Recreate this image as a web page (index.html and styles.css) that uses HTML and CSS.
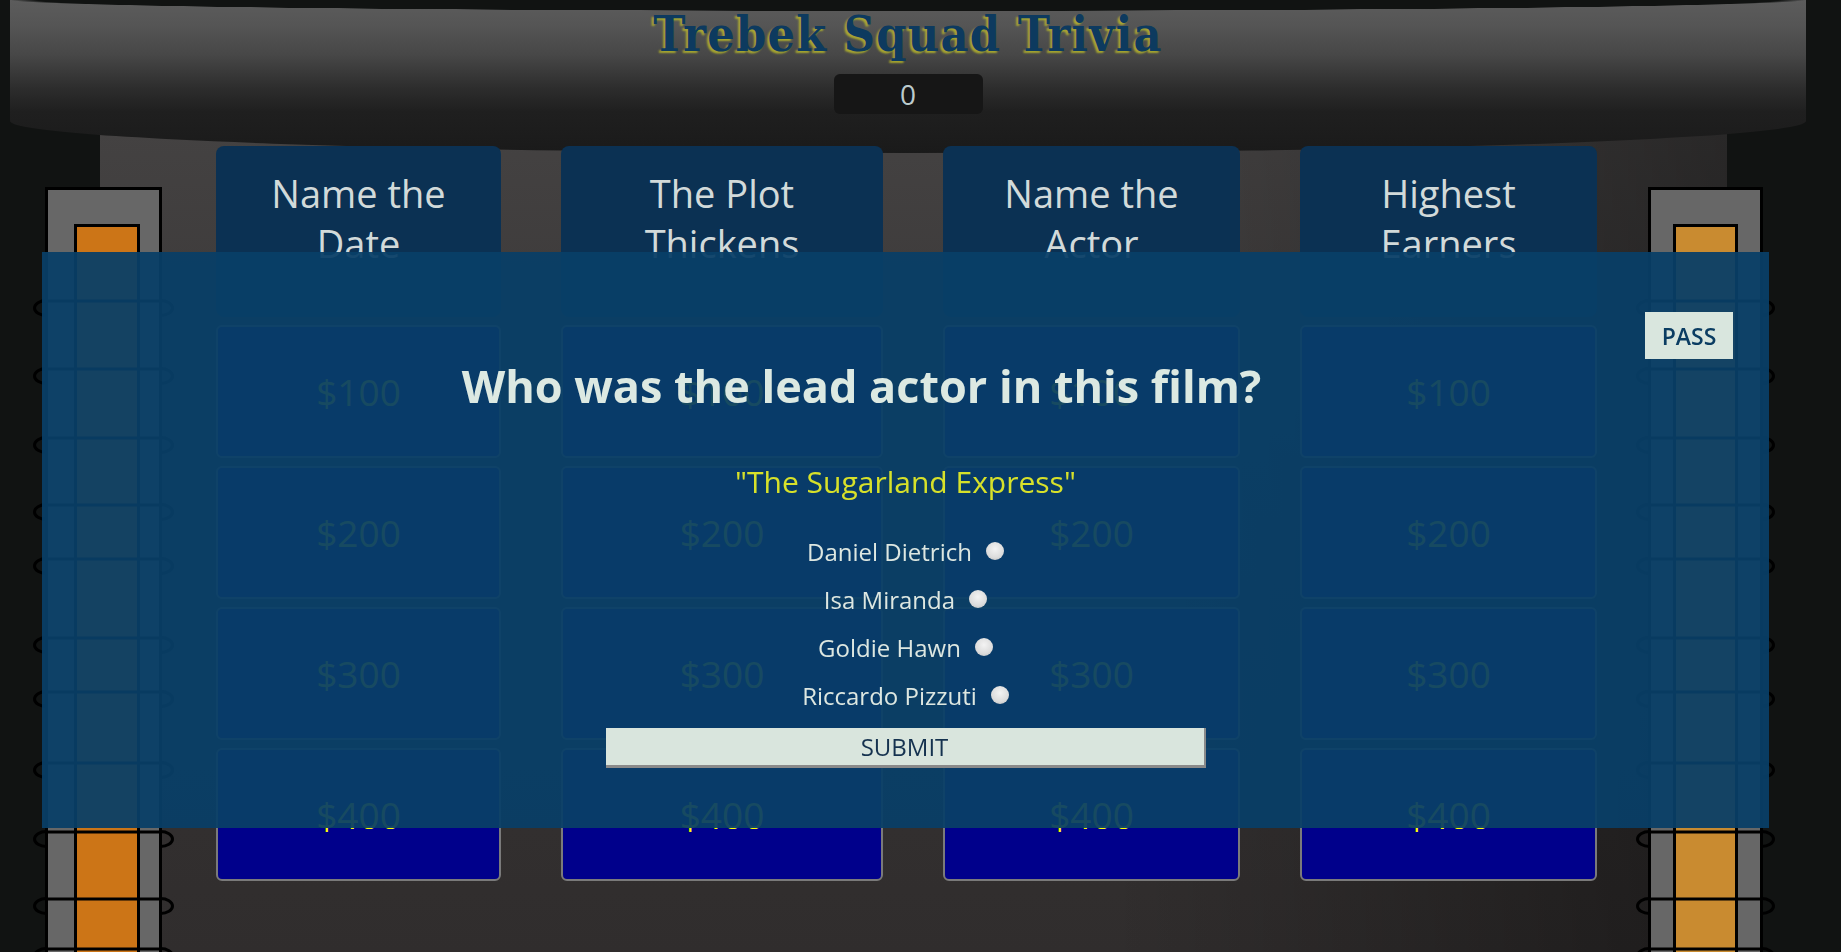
FILE: index.html
```html
<!DOCTYPE html>
<html lang="en">
<head>
<meta charset="utf-8">
<title>Trebek Squad Trivia</title>
<link rel="stylesheet" href="styles.css">
</head>
<body>
<header class="marquee">
  <h1 class="title">Trebek Squad Trivia</h1>
  <div class="score">0</div>
</header>

<main class="floor">
  <svg class="lights" viewBox="0 0 147 800" aria-hidden="true">
    <g fill="none" stroke="#000" stroke-width="3">
      <ellipse cx="15.5" cy="123" rx="12" ry="7.5"/><ellipse cx="129.5" cy="123" rx="12" ry="7.5"/>
      <ellipse cx="15.5" cy="191" rx="12" ry="7.5"/><ellipse cx="129.5" cy="191" rx="12" ry="7.5"/>
      <ellipse cx="15.5" cy="260" rx="12" ry="7.5"/><ellipse cx="129.5" cy="260" rx="12" ry="7.5"/>
      <ellipse cx="15.5" cy="327" rx="12" ry="7.5"/><ellipse cx="129.5" cy="327" rx="12" ry="7.5"/>
      <ellipse cx="15.5" cy="381" rx="12" ry="7.5"/><ellipse cx="129.5" cy="381" rx="12" ry="7.5"/>
      <ellipse cx="15.5" cy="460" rx="12" ry="7.5"/><ellipse cx="129.5" cy="460" rx="12" ry="7.5"/>
      <ellipse cx="15.5" cy="514" rx="12" ry="7.5"/><ellipse cx="129.5" cy="514" rx="12" ry="7.5"/>
      <ellipse cx="15.5" cy="585" rx="12" ry="7.5"/><ellipse cx="129.5" cy="585" rx="12" ry="7.5"/>
      <ellipse cx="15.5" cy="654" rx="12" ry="7.5"/><ellipse cx="129.5" cy="654" rx="12" ry="7.5"/>
      <ellipse cx="15.5" cy="721" rx="12" ry="7.5"/><ellipse cx="129.5" cy="721" rx="12" ry="7.5"/>
      <ellipse cx="15.5" cy="771" rx="12" ry="7.5"/><ellipse cx="129.5" cy="771" rx="12" ry="7.5"/>
    </g>
    <rect x="15.5" y="3.5" width="114" height="900" fill="#676767" stroke="#000" stroke-width="3"/>
    <rect x="44.5" y="40.5" width="63" height="900" fill="#cc7517" stroke="#000" stroke-width="3"/>
    <g stroke="#000" stroke-width="3">
      <line x1="15.5" y1="116" x2="129.5" y2="116"/>
      <line x1="15.5" y1="184" x2="129.5" y2="184"/>
      <line x1="15.5" y1="253" x2="129.5" y2="253"/>
      <line x1="15.5" y1="320" x2="129.5" y2="320"/>
      <line x1="15.5" y1="374" x2="129.5" y2="374"/>
      <line x1="15.5" y1="453" x2="129.5" y2="453"/>
      <line x1="15.5" y1="507" x2="129.5" y2="507"/>
      <line x1="15.5" y1="578" x2="129.5" y2="578"/>
      <line x1="15.5" y1="647" x2="129.5" y2="647"/>
      <line x1="15.5" y1="714" x2="129.5" y2="714"/>
      <line x1="15.5" y1="764" x2="129.5" y2="764"/>
    </g>
  </svg>

  <section class="board">
    <div class="cat">Name the Date</div>
    <div class="cat">The Plot Thickens</div>
    <div class="cat">Name the Actor</div>
    <div class="cat">Highest Earners</div>

    <div class="val">$100</div>
    <div class="val">$100</div>
    <div class="val">$100</div>
    <div class="val">$100</div>

    <div class="val">$200</div>
    <div class="val">$200</div>
    <div class="val">$200</div>
    <div class="val">$200</div>

    <div class="val">$300</div>
    <div class="val">$300</div>
    <div class="val">$300</div>
    <div class="val">$300</div>

    <div class="val">$400</div>
    <div class="val">$400</div>
    <div class="val">$400</div>
    <div class="val">$400</div>
  </section>

  <svg class="lights lights-right" viewBox="0 0 147 800" aria-hidden="true">
    <g fill="none" stroke="#000" stroke-width="3">
      <ellipse cx="15.5" cy="123" rx="12" ry="7.5"/><ellipse cx="127.5" cy="123" rx="12" ry="7.5"/>
      <ellipse cx="15.5" cy="191" rx="12" ry="7.5"/><ellipse cx="127.5" cy="191" rx="12" ry="7.5"/>
      <ellipse cx="15.5" cy="260" rx="12" ry="7.5"/><ellipse cx="127.5" cy="260" rx="12" ry="7.5"/>
      <ellipse cx="15.5" cy="327" rx="12" ry="7.5"/><ellipse cx="127.5" cy="327" rx="12" ry="7.5"/>
      <ellipse cx="15.5" cy="381" rx="12" ry="7.5"/><ellipse cx="127.5" cy="381" rx="12" ry="7.5"/>
      <ellipse cx="15.5" cy="460" rx="12" ry="7.5"/><ellipse cx="127.5" cy="460" rx="12" ry="7.5"/>
      <ellipse cx="15.5" cy="514" rx="12" ry="7.5"/><ellipse cx="127.5" cy="514" rx="12" ry="7.5"/>
      <ellipse cx="15.5" cy="585" rx="12" ry="7.5"/><ellipse cx="127.5" cy="585" rx="12" ry="7.5"/>
      <ellipse cx="15.5" cy="654" rx="12" ry="7.5"/><ellipse cx="127.5" cy="654" rx="12" ry="7.5"/>
      <ellipse cx="15.5" cy="721" rx="12" ry="7.5"/><ellipse cx="127.5" cy="721" rx="12" ry="7.5"/>
      <ellipse cx="15.5" cy="771" rx="12" ry="7.5"/><ellipse cx="127.5" cy="771" rx="12" ry="7.5"/>
    </g>
    <rect x="15.5" y="3.5" width="112" height="900" fill="#676767" stroke="#000" stroke-width="3"/>
    <rect x="40.5" y="40.5" width="62" height="900" fill="#c98b30" stroke="#000" stroke-width="3"/>
    <g stroke="#000" stroke-width="3">
      <line x1="15.5" y1="116" x2="127.5" y2="116"/>
      <line x1="15.5" y1="184" x2="127.5" y2="184"/>
      <line x1="15.5" y1="253" x2="127.5" y2="253"/>
      <line x1="15.5" y1="320" x2="127.5" y2="320"/>
      <line x1="15.5" y1="374" x2="127.5" y2="374"/>
      <line x1="15.5" y1="453" x2="127.5" y2="453"/>
      <line x1="15.5" y1="507" x2="127.5" y2="507"/>
      <line x1="15.5" y1="578" x2="127.5" y2="578"/>
      <line x1="15.5" y1="647" x2="127.5" y2="647"/>
      <line x1="15.5" y1="714" x2="127.5" y2="714"/>
      <line x1="15.5" y1="764" x2="127.5" y2="764"/>
    </g>
  </svg>
</main>

<div class="modal">
  <div class="modal-head">
    <h2 class="question">Who was the lead actor in this film?</h2>
    <button class="pass" type="button">PASS</button>
  </div>
  <p class="film">"The Sugarland Express"</p>
  <form class="answers">
    <label class="answer">Daniel Dietrich <input type="radio" name="actor"></label>
    <label class="answer">Isa Miranda <input type="radio" name="actor"></label>
    <label class="answer">Goldie Hawn <input type="radio" name="actor"></label>
    <label class="answer">Riccardo Pizzuti <input type="radio" name="actor"></label>
  </form>
  <button class="submit" type="button">SUBMIT</button>
</div>
</body>
</html>
```

FILE: styles.css
```css
html, body {
  margin: 0;
  height: 952px;
  overflow: hidden;
  background: #111312;
  font-family: "Open Sans", "Liberation Sans", sans-serif;
}

/* ---------- marquee header ---------- */
.marquee {
  position: relative;
  z-index: 1;
  height: 153px;
  margin: 0 35px 0 10px;
  padding-top: 4px;
  box-sizing: border-box;
  display: flex;
  flex-direction: column;
  align-items: center;
  border-radius: 0 0 50% 50% / 0 0 32px 32px;
  background:
    radial-gradient(898px 11px at 50% 0, #111312 97%, rgba(17, 19, 18, 0) 100%),
    linear-gradient(#5c5c5c 0px, #555 25px, #474747 55px, #2d2d2d 88px, #1f1f1f 112px, #1a1a1a 153px);
}

.title {
  margin: 0;
  font-family: "DejaVu Serif", "Liberation Serif", serif;
  font-weight: 700;
  font-stretch: condensed;
  font-size: 48px;
  line-height: 60px;
  letter-spacing: 1.3px;
  color: #0d3a5f;
  text-shadow: -2px 2px 2px rgba(190, 190, 40, 0.8);
}

.score {
  margin-top: 10px;
  width: 149px;
  height: 40px;
  border-radius: 6px;
  background: #161616;
  color: #bccbcd;
  font-size: 28px;
  line-height: 40px;
  text-align: center;
}

/* ---------- stage floor ---------- */
.floor {
  display: flex;
  align-items: flex-start;
  height: 822px;
  margin-top: -23px;
  padding-left: 31px;
  background-image:
    linear-gradient(90deg, rgba(0, 0, 0, 0) 62%, rgba(0, 0, 0, 0.4) 100%),
    linear-gradient(#444242 0%, #383535 40%, #302d2d 100%);
  background-repeat: no-repeat;
  background-position: 100px 0;
  background-size: 1627px 100%;
}

.lights {
  flex: none;
  display: block;
  width: 147px;
  height: 800px;
  margin-top: 55px;
}

.lights-right {
  margin-left: 37px;
}

.board {
  flex: none;
  z-index: 2;
  margin: 16px 0 0 38px;
  display: grid;
  grid-template-columns: 285px 322px 297px 297px;
  grid-template-rows: 171px repeat(4, 133px);
  gap: 8px 60px;
}

.cat {
  box-sizing: border-box;
  padding: 22px 28px 0;
  border-radius: 8px;
  background: #0b3153;
  color: #d2dada;
  font-size: 38px;
  line-height: 50px;
  text-align: center;
}

.val {
  box-sizing: border-box;
  display: flex;
  align-items: center;
  justify-content: center;
  border: 2px solid #7a7a7a;
  border-radius: 6px;
  background: #00008b;
  color: #ffff00;
  font-size: 37px;
}

/* ---------- question modal ---------- */
.modal {
  position: fixed;
  z-index: 10;
  left: 42px;
  top: 252px;
  width: 1727px;
  height: 576px;
  box-sizing: border-box;
  padding: 60px 36px;
  display: flex;
  flex-direction: column;
  align-items: center;
  background: rgba(8, 63, 103, 0.94);
}

.modal-head {
  align-self: stretch;
  display: flex;
  align-items: flex-start;
}

.question {
  flex: 1;
  margin: 43px 0 0;
  font-size: 45px;
  font-weight: 700;
  line-height: 61px;
  color: #dce9e2;
  text-align: center;
}

.pass {
  flex: none;
  width: 88px;
  height: 47px;
  padding: 0;
  border: 0;
  background: #d9e6de;
  color: #0b3d62;
  font-family: "Open Sans", sans-serif;
  font-weight: 600;
  font-size: 23px;
}

.film {
  margin: 45px 0 0;
  font-size: 30px;
  line-height: 41px;
  color: #d7e12a;
}

.answers {
  margin: 25px 0 0;
  display: flex;
  flex-direction: column;
  align-items: center;
}

.answer {
  display: flex;
  align-items: center;
  gap: 14px;
  height: 48px;
  font-size: 24px;
  color: #dde7e1;
}

.answer input {
  appearance: none;
  -webkit-appearance: none;
  margin: 0;
  width: 18px;
  height: 18px;
  border-radius: 50%;
  background: radial-gradient(circle at 50% 38%, #f3f3f3 0%, #dcdcdc 60%, #b9b9b9 100%);
}

.submit {
  margin-top: 9px;
  width: 600px;
  height: 42px;
  box-sizing: border-box;
  padding: 0;
  border: 0;
  border-right: 2px solid #8a8a8a;
  border-bottom: 3px solid #8a8a8a;
  background: #d9e5dd;
  color: #15324f;
  font-family: "Open Sans", sans-serif;
  font-size: 24px;
}
```
